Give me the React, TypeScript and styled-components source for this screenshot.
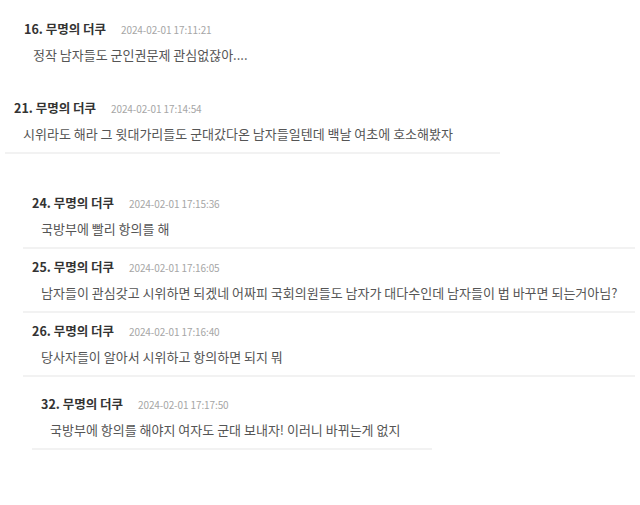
import React from "react";
import styled, { createGlobalStyle } from "styled-components";

const Global = createGlobalStyle`
  html, body { margin: 0; padding: 0; background: #ffffff; }
  body { font-family: "Noto Sans CJK KR", "Noto Sans", sans-serif; }
`;

const Page = styled.div`
  width: 640px;
  height: 505px;
  padding-top: 11px;
  box-sizing: border-box;
  overflow: hidden;
`;

const Group = styled.div<{ $indent: number; $width: number; $mt: number; $lined: boolean }>`
  margin-left: ${(p) => p.$indent}px;
  margin-top: ${(p) => p.$mt}px;
  width: ${(p) => p.$width}px;
  display: flex;
  flex-direction: column;
  & > div {
    border-bottom: ${(p) => (p.$lined ? "2px solid #f2f2f2" : "2px solid transparent")};
  }
`;

const Item = styled.div`
  padding: 9px 0 9px 9px;
  display: flex;
  flex-direction: column;
  gap: 8px;
`;

const Header = styled.div`
  display: flex;
  align-items: baseline;
  gap: 15px;
  height: 18px;
  line-height: 18px;
`;

const Name = styled.span`
  font-size: 12.5px;
  font-weight: 700;
  color: #333333;
`;

const DateText = styled.span`
  font-size: 10px;
  color: #a6a6a6;
  letter-spacing: -0.1px;
`;

const Body = styled.div`
  font-size: 13px;
  line-height: 18px;
  height: 18px;
  color: #555555;
  padding-left: 9px;
  white-space: nowrap;
`;

type C = { no: number; date: string; text: string };

const groups: { indent: number; width: number; mt: number; lined: boolean; items: C[] }[] = [
  {
    indent: 15,
    width: 400,
    mt: 0,
    lined: false,
    items: [{ no: 16, date: "2024-02-01 17:11:21", text: "정작 남자들도 군인권문제 관심없잖아...." }],
  },
  {
    indent: 5,
    width: 495,
    mt: 15,
    lined: true,
    items: [
      {
        no: 21,
        date: "2024-02-01 17:14:54",
        text: "시위라도 해라 그 윗대가리들도 군대갔다온 남자들일텐데 백날 여초에 호소해봤자",
      },
    ],
  },
  {
    indent: 23,
    width: 612,
    mt: 31,
    lined: true,
    items: [
      { no: 24, date: "2024-02-01 17:15:36", text: "국방부에 빨리 항의를 해" },
      {
        no: 25,
        date: "2024-02-01 17:16:05",
        text: "남자들이 관심갖고 시위하면 되겠네 어짜피 국회의원들도 남자가 대다수인데 남자들이 법 바꾸면 되는거아님?",
      },
      { no: 26, date: "2024-02-01 17:16:40", text: "당사자들이 알아서 시위하고 항의하면 되지 뭐" },
    ],
  },
  {
    indent: 32,
    width: 400,
    mt: 9,
    lined: true,
    items: [
      {
        no: 32,
        date: "2024-02-01 17:17:50",
        text: "국방부에 항의를 해야지 여자도 군대 보내자! 이러니 바뀌는게 없지",
      },
    ],
  },
];

export default function App() {
  return (
    <>
      <Global />
      <Page>
        {groups.map((g) => (
          <Group key={g.items[0].no} $indent={g.indent} $width={g.width} $mt={g.mt} $lined={g.lined}>
            {g.items.map((c) => (
              <Item key={c.no}>
                <Header>
                  <Name>{c.no}. 무명의 더쿠</Name>
                  <DateText>{c.date}</DateText>
                </Header>
                <Body>{c.text}</Body>
              </Item>
            ))}
          </Group>
        ))}
      </Page>
    </>
  );
}
